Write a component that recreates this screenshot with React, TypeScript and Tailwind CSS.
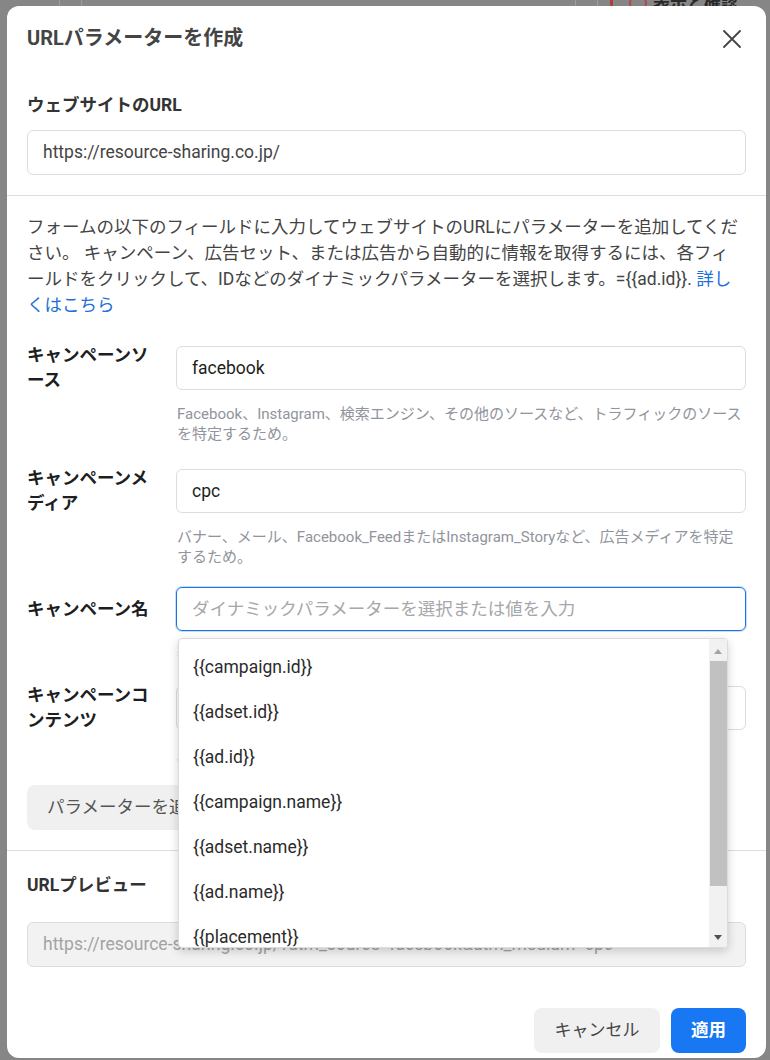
const PARAMS = [
  "campaign.id",
  "adset.id",
  "ad.id",
  "campaign.name",
  "adset.name",
  "ad.name",
  "placement",
  "site_source_name",
];

type RowProps = {
  label: string;
  value?: string;
  placeholder?: string;
  help: React.ReactNode;
  focused?: boolean;
  className?: string;
  helpClassName?: string;
  children?: React.ReactNode;
};

function ParamRow({ label, value, placeholder, help, focused, className, helpClassName, children }: RowProps) {
  return (
    <div className={className}>
      <div className="flex items-center">
        <div className="w-[132px] shrink-0 mr-[17px] text-[17.5px] font-bold leading-[25px] text-[#1c1e21]">
          {label}
        </div>
        <div className="relative flex-1">
          <div
            className={
              focused
                ? "h-[44px] rounded-md border border-[#1b74e4] shadow-[0_0_0_1px_rgba(27,116,228,0.25)] px-[15px] flex items-center text-[17.5px] text-[#a4a7ab]"
                : "h-[44px] rounded-md border border-[#dadde1] px-[15px] flex items-center text-[17.5px] text-[#1c1e21]"
            }
          >
            {value ?? placeholder}
          </div>
          {children}
        </div>
      </div>
      <div className={"ml-[150px] w-[571px] text-[15px] leading-[20px] text-[#90949c] " + (helpClassName ?? "mt-[11px]")}>
        {help}
      </div>
    </div>
  );
}

function ParamDropdown() {
  return (
    <div className="absolute z-20 left-[2px] top-[51px] w-[550px] h-[310px] bg-white rounded-[4px] border border-[#dcdcdc] shadow-[0_3px_10px_rgba(0,0,0,0.18)] overflow-hidden flex">
      <ul className="flex-1 pt-[6px]">
        {PARAMS.map((p) => (
          <li key={p} className="h-[45px] px-[14px] flex items-center text-[17.5px] text-[#2b2b2b]">
            {"{{" + p + "}}"}
          </li>
        ))}
      </ul>
      {/* scrollbar */}
      <div className="w-[18px] bg-[#f1f1f1] flex flex-col items-center">
        <div className="h-[22px] flex items-center justify-center pt-[2px]">
          <div className="w-0 h-0 border-l-[4px] border-r-[4px] border-b-[5px] border-l-transparent border-r-transparent border-b-[#a3a3a3]" />
        </div>
        <div className="w-[17px] h-[225px] ml-[1px] bg-[#c1c1c1]" />
        <div className="flex-1 flex items-end justify-center pb-[7px]">
          <div className="w-0 h-0 border-l-[4px] border-r-[4px] border-t-[5px] border-l-transparent border-r-transparent border-t-[#505050]" />
        </div>
      </div>
    </div>
  );
}

export default function App() {
  return (
    <div className="relative w-[770px] h-[1060px] overflow-hidden bg-[#868686] font-[Roboto,'Noto_Sans_CJK_JP',sans-serif]">
      {/* page behind the overlay */}
      <div className="h-[6px] flex items-start overflow-hidden">
        <div className="w-[59px]" />
        <div className="w-px h-full bg-[#9c9c9c]" />
        <div className="w-[21px]" />
        <div className="w-px h-full bg-[#9c9c9c]" />
        <div className="w-[493px]" />
        <div className="w-px h-full bg-[#9c9c9c]" />
        <div className="w-[21px]" />
        <div className="w-px h-full bg-[#9c9c9c]" />
        <div className="w-[12px]" />
        <div className="w-[3px] h-full bg-[#b53b3b]" />
        <div className="w-[16px]" />
        <div className="w-[18px] h-[18px] -mt-[6px] rounded-full border-2 border-[#b04a4a]" />
        <div className="ml-[6px] -mt-[9px] text-[17px] font-bold text-[#2a2a2a] whitespace-nowrap">表示と確認</div>
      </div>

      {/* modal */}
      <div className="absolute left-[7px] top-[6px] w-[759px] h-[1052px] bg-white rounded-[12px] overflow-hidden">
        <div className="flex items-center justify-between pl-5 pr-[25px] pt-5">
          <h2 className="text-[20px] font-bold leading-[24px] text-[#444]">URLパラメーターを作成</h2>
          <svg width="18" height="18" viewBox="0 0 18 18" className="mt-[2px]">
            <path d="M1 1L17 17M17 1L1 17" stroke="#444" strokeWidth="1.8" strokeLinecap="round" />
          </svg>
        </div>

        <div className="px-5 pt-[43px] pb-5">
          <div className="text-[17.5px] font-bold leading-[24px] text-[#333]">ウェブサイトのURL</div>
          <div className="mt-[13px] h-[45px] rounded-md border border-[#dadde1] px-[15px] flex items-center text-[17.5px] text-[#444]">
            https://resource-sharing.co.jp/
          </div>
        </div>

        <div className="border-t border-[#dadde1]" />

        <div className="px-5 pt-[18px]">
          <p className="text-[17.5px] leading-[26px] text-[#444]">
            フォームの以下のフィールドに入力してウェブサイトのURLにパラメーターを追加してください。
            キャンペーン、広告セット、または広告から自動的に情報を取得するには、各フィールドをクリックして、IDなどのダイナミックパラメーターを選択します。={"{{ad.id}}"}.{" "}
            <a className="text-[#216fdb]">詳し</a>
            <br />
            <a className="text-[#216fdb]">くはこちら</a>
          </p>

          <ParamRow
            className="mt-[25px]"
            label="キャンペーンソース"
            value="facebook"
            help="Facebook、Instagram、検索エンジン、その他のソースなど、トラフィックのソースを特定するため。"
          />
          <ParamRow
            className="mt-[22px]"
            label="キャンペーンメディア"
            value="cpc"
            help="バナー、メール、Facebook_FeedまたはInstagram_Storyなど、広告メディアを特定するため。"
          />
          <ParamRow
            className="relative z-10 mt-[20px]"
            label="キャンペーン名"
            placeholder="ダイナミックパラメーターを選択または値を入力"
            focused
            helpClassName="mt-[10px]"
            help="製品のプロモーションやキャンペーンを特定するため。"
          >
            <ParamDropdown />
          </ParamRow>
          <ParamRow
            className="mt-[22px]"
            label="キャンペーンコンテンツ"
            help="広告を区別するため。"
          />

          <button className="mt-[21px] h-[45px] px-5 rounded-lg bg-[#f0f0f0] text-[17.5px] text-[#555]">
            パラメーターを追加
          </button>
        </div>

        <div className="mt-5 border-t border-[#dadde1]" />

        <div className="px-5 pt-[22px]">
          <div className="text-[17.5px] font-bold leading-[24px] text-[#333]">URLプレビュー</div>
          <div className="mt-[25px] h-[45px] rounded-md border border-[#dadde1] bg-[#f2f2f2] px-[15px] flex items-center text-[17.5px] text-[#a3a3a3] whitespace-nowrap">
            https://resource-sharing.co.jp/?utm_source=facebook&amp;utm_medium=cpc
          </div>

          <div className="mt-[41px] flex justify-end gap-[11px]">
            <button className="h-[45px] w-[126px] rounded-lg bg-[#f0f0f0] text-[17px] text-[#444]">キャンセル</button>
            <button className="h-[45px] w-[75px] rounded-lg bg-[#1877f2] text-[17.5px] font-bold text-white">適用</button>
          </div>
        </div>
      </div>
    </div>
  );
}
